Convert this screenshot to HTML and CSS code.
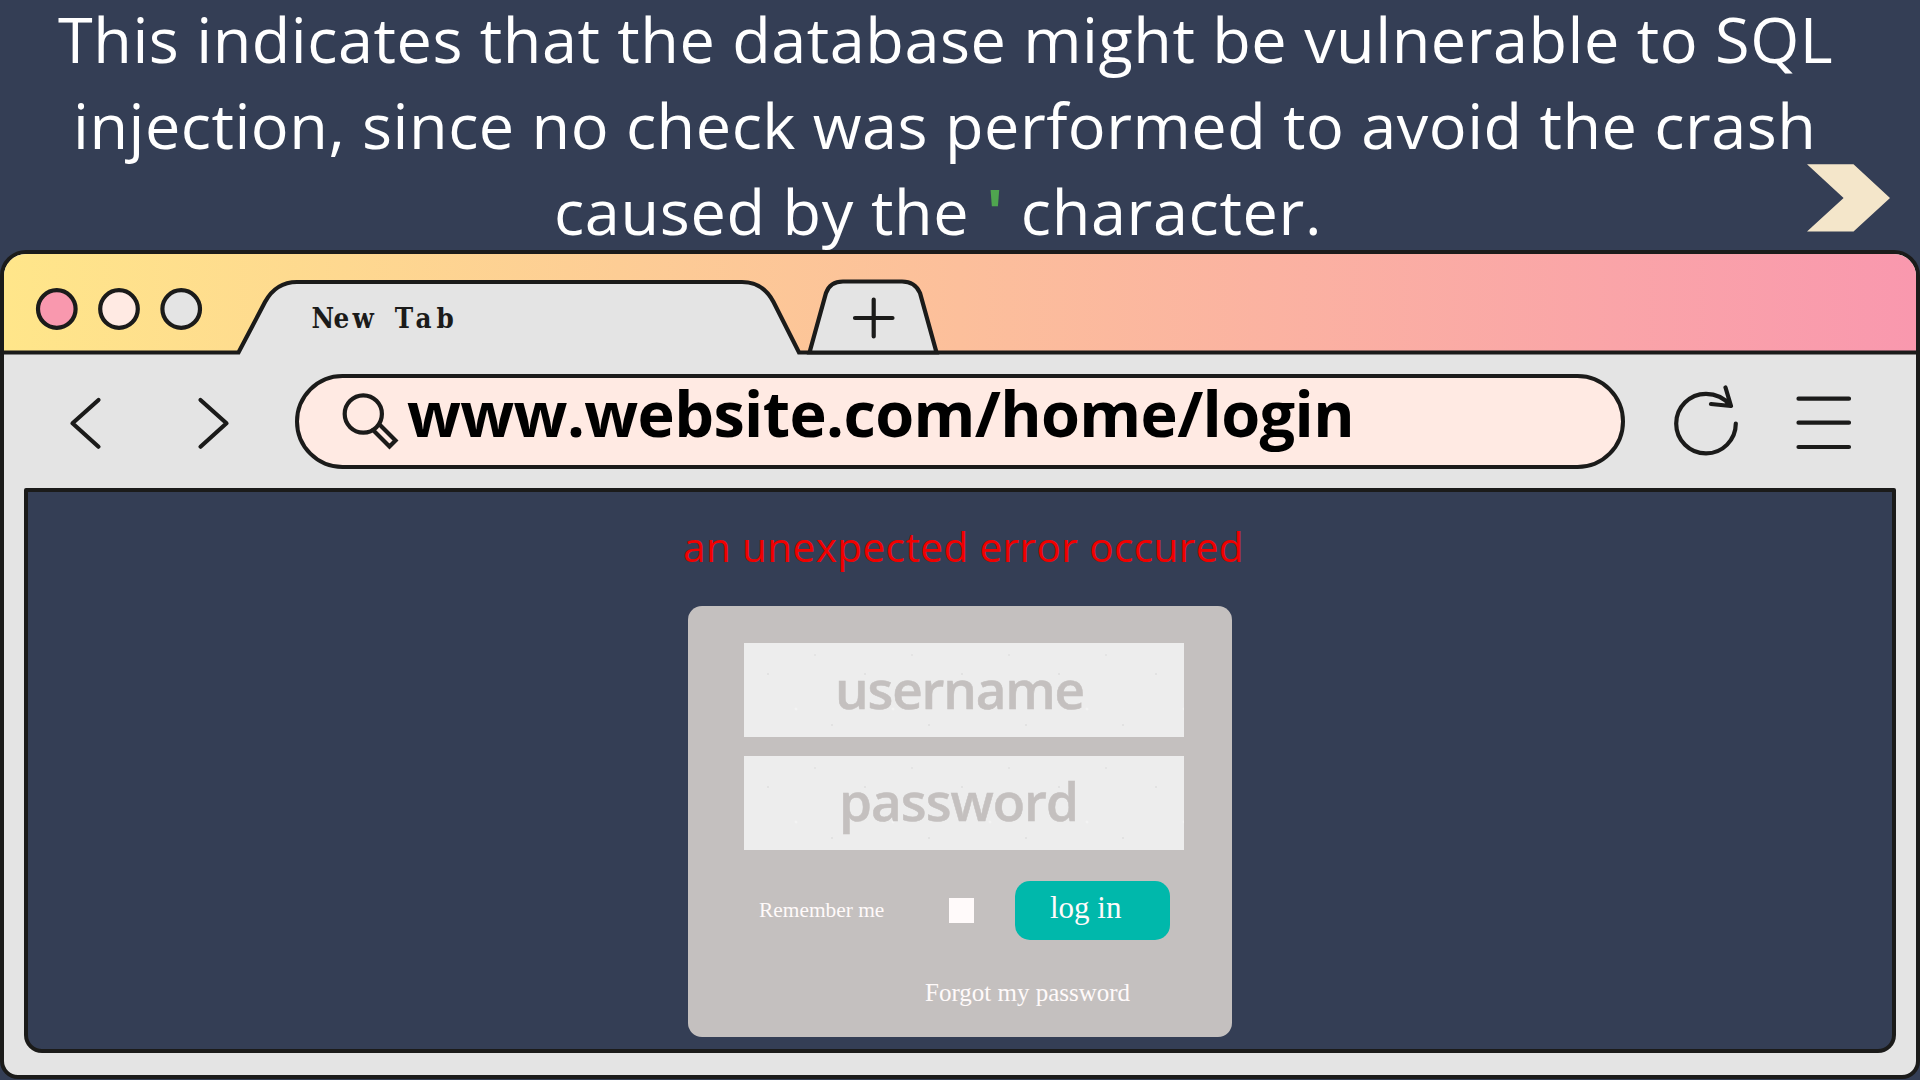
FILE: index.html
```html
<!DOCTYPE html>
<html lang="en">
<head>
<meta charset="utf-8">
<title>SQL injection</title>
<link rel="stylesheet" href="styles.css">
</head>
<body>
<main class="slide">
  <header class="caption">
    <p class="caption-text">
      <span class="line l1">This indicates that the database might be vulnerable to SQL</span>
      <span class="line l2">injection, since no check was performed to avoid the crash</span>
      <span class="line l3">caused by the <span class="quote">'</span> character.</span>
    </p>
    <svg class="next" width="84" height="68" viewBox="0 0 84 68"><path d="M0 .3H46.5L83 34 46.5 67.5H0L36.600 34Z" fill="#f4e6ca"/></svg>
  </header>
  <section class="browser">
    <svg class="tabstrip" width="1912" height="101" viewBox="4 254 1912 101" fill="none" stroke="#1b1b1a" stroke-width="4.200">
      <path d="M0 352.500H238.500L265 302Q276 282 297 282H742Q763 282 773.500 302L799 352.500H1920V360H0Z" fill="#e4e4e4"/>
      <path d="M809.500 352.500 826 293Q830 281.500 843 281.500H902Q915 281.500 920 293L936.500 352.500Z" fill="#e4e4e4"/>
      <path d="M855 318H892.500M873.700 299.500V336.500" stroke-linecap="round"/>
      <circle cx="56.800" cy="309" r="18.800" fill="#f998ae"/>
      <circle cx="119" cy="309" r="18.800" fill="#ffeae3"/>
      <circle cx="181.200" cy="309" r="18.800" fill="#e4e4e4"/>
      <text class="tab-title" x="311.500 333.500 352.500 374 394.800 415.500 436.500" y="327.500">New Tab</text>
    </svg>
    <nav class="toolbar">
      <svg class="arrows" width="291" height="94" viewBox="4 374 291 94"><path d="M98.500 400 72.500 423.300 98.500 446.700M200.500 400 226.500 423.300 200.500 446.700"/></svg>
      <div class="address">
        <svg class="lens" width="60" height="60" viewBox="340 390 60 60"><circle cx="363.300" cy="414" r="18.600"/><path d="M373 430 389.500 446.500 395.500 440.500 379.500 424.500"/></svg>
        <span class="url">www.website.com/home/login</span>
      </div>
      <svg class="tools" width="240" height="94" viewBox="1640 374 240 94"><path d="M1735.800 423.500A29.800 29.800 0 1 1 1706 393.800Q1721 394 1730 405M1725.500 387.500 1731 406 1711 404M1798.500 398.700H1849M1798.500 422.700H1849M1798.500 447H1849"/></svg>
    </nav>
    <div class="viewport">
      <p class="error">an unexpected error occured</p>
      <form class="card">
        <div class="field">username</div>
        <div class="field second">password</div>
        <div class="actions">
          <span class="remember">Remember me</span>
          <span class="check"></span>
          <span class="login">log in</span>
        </div>
        <div class="forgot">Forgot my password</div>
      </form>
    </div>
  </section>
</main>
</body>
</html>
```
FILE: styles.css
```css
* { box-sizing: border-box; margin: 0; }
body { background: #343e55; font-family: "Open Sans", "Noto Sans", sans-serif; }
.slide { width: 1920px; height: 1080px; overflow: hidden; background: #343e55; display: flex; flex-direction: column; }
.caption { height: 250px; flex: none; position: relative; color: #fff; }
.caption-text { font-size: 63px; line-height: 86px; margin-top: -4px; letter-spacing: .52px; white-space: nowrap; }
.line { display: block; }
.l1 { padding-left: 58px; }
.l2 { padding-left: 73px; letter-spacing: .5px; }
.l3 { padding-left: 554px; letter-spacing: .64px; }
.quote { color: #4fa54f; font-weight: 700; }
.next { position: absolute; left: 1807px; top: 164px; }
.browser { height: 829px; flex: none; border: 4px solid #1b1b1a; border-radius: 26px 26px 18px 18px; background: #e4e4e4; overflow: hidden; display: flex; flex-direction: column; }
.tabstrip { display: block; flex: none; background: linear-gradient(90deg, #ffe68a, #fcbf9b 50%, #f998ae); }
.tab-title { font: bold condensed 27.5px "DejaVu Serif Condensed", "DejaVu Serif", serif; fill: #1b1b1a; stroke: none; }
.toolbar { display: flex; margin-top: 19px; height: 95px; flex: none; }
.toolbar svg { fill: none; stroke: #1b1b1a; stroke-width: 4.2px; stroke-linecap: round; stroke-linejoin: round; }
.address { width: 1330px; height: 95px; border: 4.3px solid #1b1b1a; border-radius: 48px; background: #ffeae3; display: flex; padding: 12px 0 0 41px; }
.address .lens { stroke-linejoin: miter; flex: none; }
.url { font-size: 63px; font-weight: 700; line-height: 60px; letter-spacing: -.62px; margin: -7px 0 0 7px; color: #000; white-space: nowrap; }
.tools { margin-left: 15px; }
.viewport { margin: 19px 20px 0; height: 565px; border: 4px solid #1b1b1a; border-radius: 2px 2px 18px 18px; background: #343e55; padding-left: 660px; }
.error { color: #f00000; font-size: 40.5px; line-height: 50px; padding-top: 30px; height: 114px; letter-spacing: .4px; text-indent: -5px; white-space: nowrap; }
.card { width: 544px; height: 431px; background: #c4c0bf; border-radius: 14px; padding: 37px 48px 0 56px; display: flex; flex-direction: column; }
.field { height: 94px; background-color: #ededed; background-image: radial-gradient(circle at 24px 31px, #e2e2e2 1px, transparent 1.6px), radial-gradient(circle at 71px 12px, #e4e4e4 1px, transparent 1.6px), radial-gradient(circle at 52px 66px, #f3f3f3 1px, transparent 1.8px), radial-gradient(circle at 88px 82px, #e2e2e2 1px, transparent 1.6px); background-size: 97px 94px; color: #c4c0bf; font-size: 53px; font-weight: 600; -webkit-text-stroke: .5px #c4c0bf; line-height: 92px; letter-spacing: -1.2px; padding-right: 9px; text-align: center; }
.field.second { margin-top: 18.5px; line-height: 90px; letter-spacing: -1px; padding-right: 11px; }
.actions { display: flex; margin-top: 31px; height: 60px; color: #fffafa; font-family: "Liberation Serif", serif; padding-left: 15px; align-items: center; }
.remember { font-size: 21.4px; width: 190px; }
.check { width: 25px; height: 25px; background: #fffafa; }
.login { width: 155px; height: 59px; margin-left: 41px; border-radius: 15px; background: #00b8ab; font-size: 31px; line-height: 54px; padding-left: 35px; }
.forgot { font: 25px/30px "Liberation Serif", serif; color: #fffafa; margin-top: 37px; padding-left: 181px; }
```
